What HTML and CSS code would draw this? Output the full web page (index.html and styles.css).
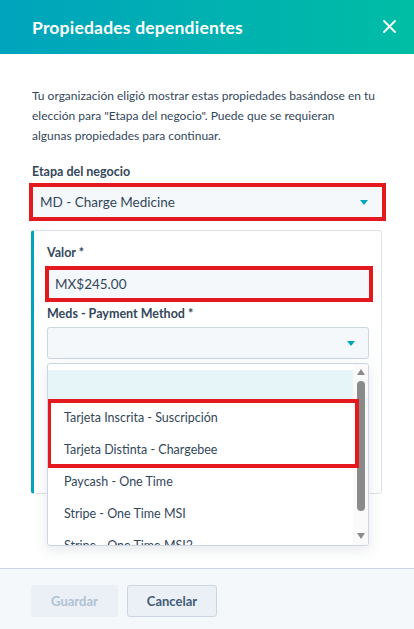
FILE: index.html
```html
<!DOCTYPE html>
<html lang="es">
    <head>
        <meta charset="UTF-8">
        <meta name="viewport" content="width=device-width, initial-scale=1.0">
        <title>Propiedades dependientes</title>
        <link rel="stylesheet" href="styles.css">
    </head>

    <body>
        <div class="modal">
            <header class="modal-header">
                <h1>Propiedades dependientes</h1>
                <svg class="close-button" width="13" height="13" viewBox="0 0 13 13">
                    <path d="M1 1L12 12M12 1L1 12" stroke="#ffffff" stroke-width="1.8" stroke-linecap="round"/>
                </svg>
            </header>

            <div class="modal-body">
                <p class="intro">Tu organización eligió mostrar estas propiedades basándose en tu<br>elección para "Etapa del negocio". Puede que se requieran<br>algunas propiedades para continuar.</p>

                <div class="field-label">Etapa del negocio</div>
                <div class="mark mark-stage">
                    <div class="select">
                        <span>MD - Charge Medicine</span>
                        <span class="caret"></span>
                    </div>
                </div>

                <div class="card">
                    <div class="field-label">Valor *</div>
                    <div class="mark mark-value">
                        <div class="input">MX$245.00</div>
                    </div>

                    <div class="field-label">Meds - Payment Method *</div>
                    <div class="select-wrap">
                        <div class="select select-empty">
                            <span></span>
                            <span class="caret"></span>
                        </div>

                        <div class="dropdown">
                            <ul class="options">
                                <li class="option active"></li>
                                <li class="option">Tarjeta Inscrita - Suscripción</li>
                                <li class="option">Tarjeta Distinta - Chargebee</li>
                                <li class="option">Paycash - One Time</li>
                                <li class="option">Stripe - One Time MSI</li>
                                <li class="option">Stripe - One Time MSI2</li>
                            </ul>
                            <div class="scrollbar">
                                <span class="arrow-up"></span>
                                <span class="thumb"></span>
                                <span class="arrow-down"></span>
                            </div>
                            <div class="mark-options"></div>
                        </div>
                    </div>
                </div>
            </div>

            <footer class="modal-footer">
                <button class="btn btn-disabled">Guardar</button>
                <button class="btn btn-secondary">Cancelar</button>
            </footer>
        </div>
    </body>
</html>
```

FILE: styles.css
```css
* {
    box-sizing: border-box;
}

body {
    margin: 0;
    background-color: #ffffff;
    color: #33475b;
    font-family: 'Lato', 'Liberation Sans', sans-serif;
}

.modal {
    display: flex;
    flex-direction: column;
    height: 100vh;
}

.modal-header {
    height: 54px;
    padding: 0 18px 0 32px;
    display: flex;
    align-items: center;
    justify-content: space-between;
    background: linear-gradient(90deg, #00a4bd 0%, #00bda5 100%);
}

.modal-header h1 {
    margin: 0;
    color: #ffffff;
    font-size: 17.5px;
    font-weight: 700;
    letter-spacing: 0.2px;
}

.close-button {
    cursor: pointer;
    margin-top: -2px;
}

.modal-body {
    flex: 1;
    padding: 32px 28px 0 29px;
}

.intro {
    margin: 0 0 17px 3px;
    font-size: 12px;
    line-height: 20px;
    white-space: nowrap;
}

.field-label {
    font-size: 12.5px;
    font-weight: 700;
    line-height: 18px;
    margin-left: 3px;
}

.mark {
    border: 4px solid #e4181f;
}

.mark-stage {
    margin-top: 2px;
}

.select {
    display: flex;
    align-items: center;
    justify-content: space-between;
    height: 30px;
    padding: 0 14px 0 7px;
    background-color: #f5f8fa;
    font-size: 13.5px;
}

.caret {
    width: 0;
    height: 0;
    border-left: 4.5px solid transparent;
    border-right: 4.5px solid transparent;
    border-top: 5px solid #00a4bd;
}

.card {
    margin: 9px 4px 0 2px;
    padding: 13px 12px 134px 13px;
    border: 1px solid #dfe3eb;
    border-left: 3px solid #00a4bd;
    border-radius: 3px;
}

.card .field-label {
    margin-left: 0;
}

.mark-value {
    margin: 4px -4px 3px -2px;
}

.input {
    height: 28px;
    line-height: 28px;
    padding: 0 6px;
    background-color: #f5f8fa;
    font-size: 13.5px;
}

.select-wrap {
    position: relative;
    margin-top: 4px;
}

.select-empty {
    height: 32px;
    border: 1px solid #cbd6e2;
    border-radius: 3px;
    padding-right: 13px;
}

.dropdown {
    position: absolute;
    top: 36px;
    left: 0;
    right: 0;
    height: 183px;
    display: flex;
    background-color: #ffffff;
    border: 1px solid #cbd6e2;
    border-radius: 3px;
    box-shadow: 0 4px 14px rgba(45, 62, 80, 0.12);
    overflow: hidden;
    z-index: 2;
}

.options {
    flex: 1;
    list-style: none;
    margin: 0;
    padding: 6px 0 0 0;
}

.option {
    height: 32px;
    line-height: 32px;
    padding-left: 16px;
    font-size: 12.5px;
    white-space: nowrap;
}

.option.active {
    background-color: #e5f5f8;
}

.scrollbar {
    width: 15px;
    display: flex;
    flex-direction: column;
    align-items: center;
    background-color: #fafafa;
}

.arrow-up,
.arrow-down {
    width: 0;
    height: 0;
    border-left: 4.5px solid transparent;
    border-right: 4.5px solid transparent;
}

.arrow-up {
    margin-top: 5px;
    border-bottom: 6px solid #8a8a8a;
}

.arrow-down {
    margin-top: 22px;
    border-top: 6px solid #8a8a8a;
}

.thumb {
    margin-top: 6px;
    width: 8px;
    height: 130px;
    border-radius: 4px;
    background-color: #8a8a8a;
}

.mark-options {
    position: absolute;
    left: -1px;
    top: 35px;
    width: 312px;
    height: 69px;
    border: 4px solid #e4181f;
}

.modal-footer {
    height: 61px;
    padding: 16px 31px 0 31px;
    display: flex;
    align-items: flex-start;
    gap: 9px;
    background-color: #f5f8fa;
    border-top: 1px solid #cbd6e2;
}

.btn {
    height: 32px;
    font-family: 'Lato', 'Liberation Sans', sans-serif;
    font-size: 13px;
    font-weight: 700;
    border-radius: 3px;
    background-color: #eaf0f6;
    cursor: pointer;
}

.btn-disabled {
    width: 87px;
    color: #b0c1d4;
    border: 1px solid #eaf0f6;
    cursor: default;
}

.btn-secondary {
    width: 90px;
    color: #425b76;
    border: 1px solid #cbd6e2;
}
```
